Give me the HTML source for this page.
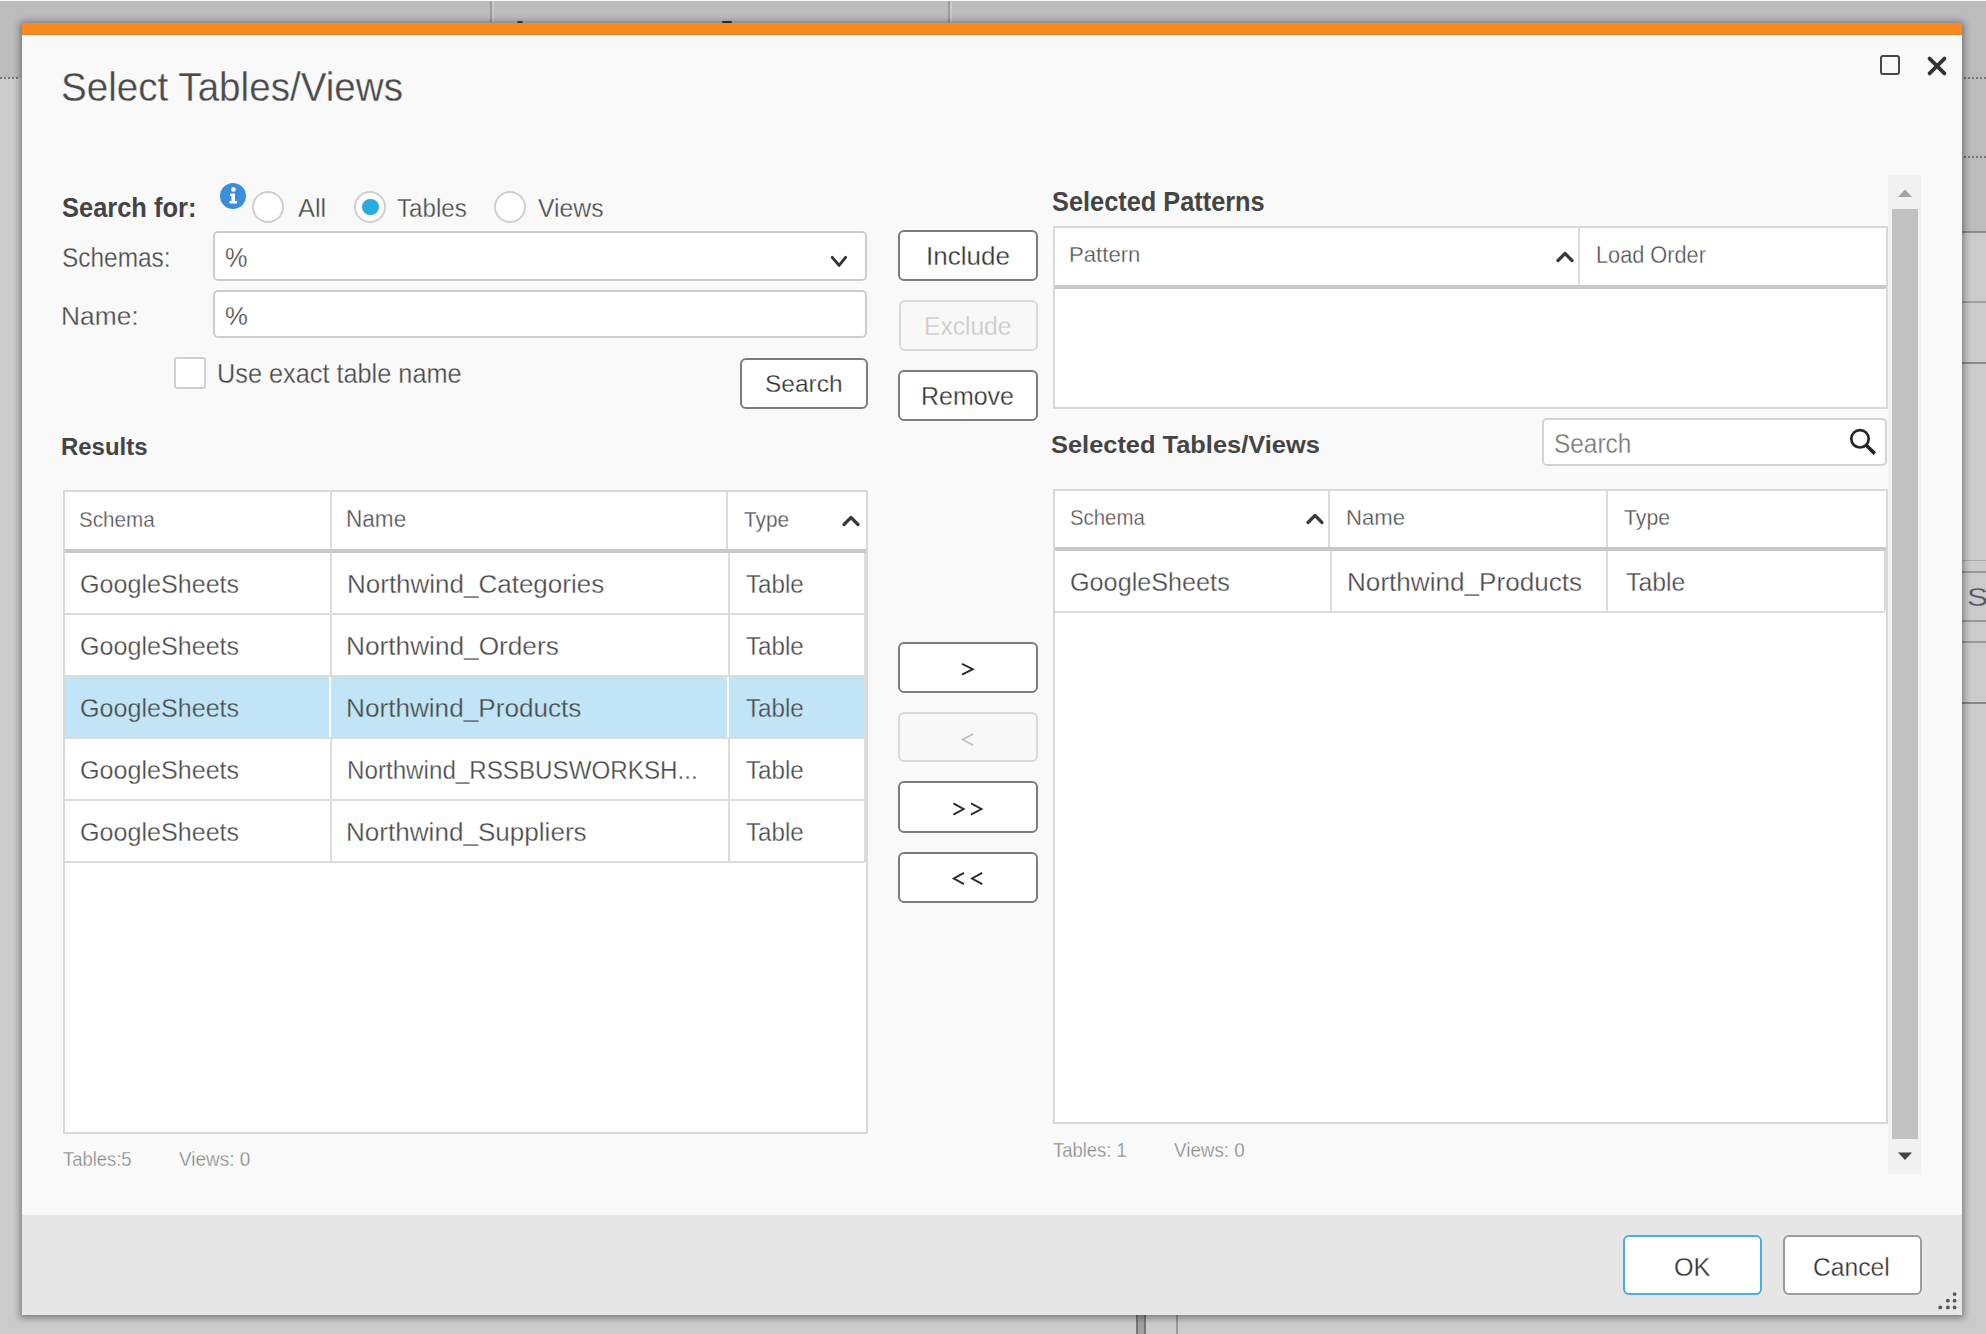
<!DOCTYPE html>
<html><head><meta charset="utf-8">
<style>
html,body{margin:0;padding:0;width:1986px;height:1334px;overflow:hidden;background:#cbcbcb;font-family:"Liberation Sans",sans-serif;}
.a{position:absolute;box-sizing:border-box;}
.t{position:absolute;white-space:nowrap;line-height:1;transform-origin:0 0;}
.btn{position:absolute;box-sizing:border-box;background:#fff;border:2px solid #7c7c7c;border-radius:6px;}
.dis{border-color:#d9d9d9;background:#f8f8f8;}
.inp{position:absolute;box-sizing:border-box;background:#fff;border:2px solid #cccccc;border-radius:5px;}
.grid{position:absolute;box-sizing:border-box;background:#fff;border:2px solid #d9d9d9;}
.l{position:absolute;}
.rad{position:absolute;box-sizing:border-box;width:32px;height:32px;border-radius:50%;border:2px solid #cfcfcf;background:#fff;}
</style></head><body>
<!-- ===== background ===== -->
<div class="l" style="left:0;top:0;width:1986px;height:1px;background:#fbfbfb"></div>
<div class="l" style="left:0;top:1px;width:1986px;height:77px;background:#bcbcbc"></div>
<div class="l" style="left:1962px;top:78px;width:24px;height:154px;background:#bcbcbc"></div>
<div class="l" style="left:0;top:77px;width:20px;height:2px;background-image:linear-gradient(90deg,#777 50%,transparent 50%);background-size:4px 2px"></div>
<div class="l" style="left:1964px;top:77px;width:22px;height:2px;background-image:linear-gradient(90deg,#777 50%,transparent 50%);background-size:4px 2px"></div>
<div class="l" style="left:1964px;top:156px;width:22px;height:2px;background-image:linear-gradient(90deg,#777 50%,transparent 50%);background-size:4px 2px"></div>
<div class="l" style="left:1962px;top:231px;width:24px;height:2px;background:#8a8a8a"></div>
<div class="l" style="left:1962px;top:301px;width:24px;height:2px;background:#a0a0a0"></div>
<div class="l" style="left:1962px;top:362px;width:24px;height:2px;background:#8a8a8a"></div>
<div class="l" style="left:1962px;top:560px;width:24px;height:1px;background:#aaa"></div>
<div class="l" style="left:1962px;top:571px;width:24px;height:2px;background:#999"></div>
<div class="l" style="left:1962px;top:620px;width:24px;height:2px;background:#999"></div>
<div class="l" style="left:1962px;top:641px;width:24px;height:2px;background:#999"></div>
<div class="l" style="left:1962px;top:702px;width:24px;height:2px;background:#888"></div>
<div class="l" style="left:490px;top:1px;width:2px;height:22px;background:#9c9c9c"></div><div class="l" style="left:492px;top:1px;width:2px;height:22px;background:#cacaca"></div>
<div class="l" style="left:948px;top:1px;width:2px;height:22px;background:#9c9c9c"></div><div class="l" style="left:950px;top:1px;width:2px;height:22px;background:#cacaca"></div>
<div class="l" style="left:517px;top:21px;width:6px;height:2px;background:#444;border-radius:1px"></div>
<div class="l" style="left:722px;top:21px;width:10px;height:2px;background:#333;border-radius:1px"></div>
<div class="l" style="left:1136px;top:1315px;width:10px;height:19px;background:#a0a0a0;border-left:2px solid #777;border-right:2px solid #777;box-sizing:border-box"></div>
<div class="l" style="left:1176px;top:1315px;width:2px;height:19px;background:#9a9a9a"></div>

<!-- ===== dialog ===== -->
<div class="l" style="left:22px;top:23px;width:1940px;height:1292px;background:#f9f9f9;box-shadow:0 1px 7px 2px rgba(0,0,0,.4)"></div>
<div class="l" style="left:22px;top:23px;width:1940px;height:11px;background:#f7891f;border-bottom:1px solid #e67f22"></div>
<div class="l" style="left:22px;top:1215px;width:1940px;height:100px;background:#e6e6e6"></div>

<!-- title buttons -->
<div class="a" style="left:1880px;top:55px;width:20px;height:20px;border:2px solid #474747;border-radius:3px"></div>
<svg class="l" style="left:1924px;top:53px" width="26" height="26" viewBox="0 0 26 26"><path d="M5.6 5.6 L20.4 20.4 M20.4 5.6 L5.6 20.4" stroke="#333" stroke-width="3.8" stroke-linecap="round"/></svg>

<!-- info + radios -->
<svg class="l" style="left:219px;top:182px" width="28" height="28" viewBox="0 0 28 28"><circle cx="14" cy="14" r="13" fill="#3b8fd8"/><circle cx="14.5" cy="7.5" r="2.3" fill="#fff"/><path d="M11 11.5 H16 V19 H18 V21.5 H10.5 V19 H12.5 V14 H11 Z" fill="#fff"/></svg>
<div class="rad" style="left:252px;top:191px"></div>
<div class="rad" style="left:354px;top:191px"></div>
<div class="l" style="left:362px;top:198.5px;width:16.5px;height:16.5px;border-radius:50%;background:#29abe2"></div>
<div class="rad" style="left:494px;top:191px"></div>

<!-- inputs -->
<div class="inp" style="left:213px;top:231px;width:654px;height:49.5px"></div>
<svg class="l" style="left:829px;top:254px" width="20" height="14" viewBox="0 0 20 14"><path d="M3.2 3.4 L10.1 11.4 L16.6 3.4" fill="none" stroke="#333" stroke-width="2.9" stroke-linecap="round" stroke-linejoin="round"/></svg>
<div class="inp" style="left:213px;top:290px;width:654px;height:48px"></div>
<div class="a" style="left:174px;top:357px;width:32px;height:32px;border:2px solid #cfcfcf;border-radius:3px;background:#fff"></div>

<!-- buttons -->
<div class="btn" style="left:740px;top:357.5px;width:127.5px;height:51px"></div>
<div class="btn" style="left:898px;top:229.5px;width:139.5px;height:51px"></div>
<div class="btn dis" style="left:898.5px;top:299.5px;width:139px;height:51px"></div>
<div class="btn" style="left:898px;top:369.5px;width:139.5px;height:51px"></div>

<div class="btn" style="left:898px;top:641.5px;width:139.5px;height:51px"></div>
<div class="btn dis" style="left:898px;top:711.5px;width:139.5px;height:50.5px"></div>
<div class="btn" style="left:898px;top:781px;width:139.5px;height:51.5px"></div>
<div class="btn" style="left:898px;top:851.5px;width:139.5px;height:51.5px"></div>
<svg class="l" style="left:900px;top:640px" width="140" height="270" viewBox="900 640 140 270">
 <path d="M962 663.8 L972.8 669.2 L962 674.6" fill="none" stroke="#2a2a2a" stroke-width="1.9"/>
 <path d="M973.2 734 L962.6 739.6 L973.2 745.2" fill="none" stroke="#bdbdbd" stroke-width="1.6"/>
 <path d="M953.4 803.4 L963.6 809 L953.4 814.6 M971 803.4 L981.4 809 L971 814.6" fill="none" stroke="#2a2a2a" stroke-width="1.9"/>
 <path d="M964 872.8 L953.8 878.5 L964 884.2 M982.2 872.8 L972 878.5 L982.2 884.2" fill="none" stroke="#2a2a2a" stroke-width="1.9"/>
</svg>

<!-- Selected patterns grid -->
<div class="grid" style="left:1052.5px;top:226px;width:835px;height:182.5px"></div>
<div class="l" style="left:1054.5px;top:285px;width:831px;height:4px;background:#c9c9c9"></div>
<div class="l" style="left:1577.5px;top:228px;width:2px;height:57px;background:#dcdcdc"></div>
<svg class="l" style="left:1553px;top:246px" width="24" height="18" viewBox="0 0 24 18"><path d="M5 14.5 L12 7.5 L19 14.5" fill="none" stroke="#3a3a3a" stroke-width="3.2" stroke-linecap="round" stroke-linejoin="round"/></svg>

<!-- search box -->
<div class="inp" style="left:1541.5px;top:417.5px;width:345.5px;height:48.5px;border-color:#d2d2d2"></div>
<svg class="l" style="left:1846px;top:425px" width="34" height="34" viewBox="0 0 34 34"><circle cx="14" cy="13.8" r="8.7" fill="none" stroke="#252525" stroke-width="2.7"/><path d="M20 20 L28.8 28.6" stroke="#252525" stroke-width="3.6"/></svg>

<!-- selected tables grid -->
<div class="grid" style="left:1052.5px;top:488.5px;width:835px;height:635.5px"></div>
<div class="l" style="left:1054.5px;top:547px;width:831px;height:4px;background:#c9c9c9"></div>
<div class="l" style="left:1327.5px;top:490.5px;width:2px;height:56.5px;background:#dcdcdc"></div>
<div class="l" style="left:1605.5px;top:490.5px;width:2px;height:56.5px;background:#dcdcdc"></div>
<div class="l" style="left:1329.5px;top:551px;width:2px;height:60px;background:#dcdcdc"></div>
<div class="l" style="left:1606px;top:551px;width:2px;height:60px;background:#dcdcdc"></div>
<div class="l" style="left:1054.5px;top:610.5px;width:830px;height:2px;background:#dcdcdc"></div>
<div class="l" style="left:1883.5px;top:551px;width:2px;height:60px;background:#dcdcdc"></div>
<svg class="l" style="left:1303px;top:508px" width="24" height="18" viewBox="0 0 24 18"><path d="M5 14.5 L12 7.5 L19 14.5" fill="none" stroke="#3a3a3a" stroke-width="3.2" stroke-linecap="round" stroke-linejoin="round"/></svg>

<!-- results grid -->
<div class="grid" style="left:62.5px;top:489.5px;width:805px;height:644.5px"></div>
<div class="l" style="left:64.5px;top:676px;width:800px;height:62px;background:#c1e5f6"></div>
<div class="l" style="left:64.5px;top:549px;width:801px;height:4px;background:#c9c9c9"></div>
<div class="l" style="left:329.5px;top:491.5px;width:2px;height:57.5px;background:#dcdcdc"></div>
<div class="l" style="left:726px;top:491.5px;width:2px;height:57.5px;background:#dcdcdc"></div>
<div class="l" style="left:329.5px;top:553px;width:2px;height:309px;background:#dcdcdc"></div>
<div class="l" style="left:727.5px;top:553px;width:2px;height:309px;background:#dcdcdc"></div>
<div class="l" style="left:863.5px;top:553px;width:2px;height:309px;background:#dcdcdc"></div>
<div class="l" style="left:64.5px;top:613px;width:800px;height:2px;background:#dcdcdc"></div>
<div class="l" style="left:64.5px;top:675px;width:800px;height:2px;background:#dcdcdc"></div>
<div class="l" style="left:64.5px;top:737px;width:800px;height:2px;background:#dcdcdc"></div>
<div class="l" style="left:64.5px;top:799px;width:800px;height:2px;background:#dcdcdc"></div>
<div class="l" style="left:64.5px;top:861px;width:800px;height:2px;background:#dcdcdc"></div>
<div class="l" style="left:328.5px;top:677px;width:2px;height:60px;background:#fff"></div>
<div class="l" style="left:726.5px;top:677px;width:2px;height:60px;background:#fff"></div>
<svg class="l" style="left:839px;top:510px" width="24" height="18" viewBox="0 0 24 18"><path d="M5 14.5 L12 7.5 L19 14.5" fill="none" stroke="#3a3a3a" stroke-width="3.2" stroke-linecap="round" stroke-linejoin="round"/></svg>

<!-- scrollbar -->
<div class="l" style="left:1888px;top:175px;width:33px;height:999px;background:#f1f1f1"></div>
<div class="l" style="left:1892px;top:209px;width:26px;height:929.5px;background:#c1c1c1"></div>
<svg class="l" style="left:1895px;top:186px" width="20" height="14" viewBox="0 0 20 14"><path d="M3 11 L10 3.5 L17 11 Z" fill="#a3a3a3"/></svg>
<svg class="l" style="left:1895px;top:1149px" width="20" height="14" viewBox="0 0 20 14"><path d="M3 3.5 L10 11 L17 3.5 Z" fill="#444"/></svg>

<!-- footer buttons -->
<div class="btn" style="left:1622.5px;top:1235px;width:139.5px;height:60px;border-color:#4aaee2"></div>
<div class="btn" style="left:1782.5px;top:1235px;width:139px;height:60px;border-color:#9c9c9c"></div>
<svg class="l" style="left:1936px;top:1290px" width="24" height="22" viewBox="1936 1290 24 22">
 <g fill="#555"><circle cx="1954.6" cy="1294.1" r="1.9"/><circle cx="1947.9" cy="1300.7" r="1.9"/><circle cx="1954.6" cy="1300.7" r="1.9"/><circle cx="1940.2" cy="1307.4" r="1.9"/><circle cx="1947.9" cy="1307.4" r="1.9"/><circle cx="1954.6" cy="1307.4" r="1.9"/></g>
</svg>

<!-- ===== texts ===== -->
<div class="t" style="left:61.08px;top:67.59px;font-size:40.25px;font-weight:400;color:#4a4a4a;transform:scaleX(0.9592);-webkit-text-stroke:0.3px #f9f9f9">Select Tables/Views</div>
<div class="t" style="left:61.67px;top:193.93px;font-size:27.5px;font-weight:700;color:#444;transform:scaleX(0.9254)">Search for:</div>
<div class="t" style="left:298.00px;top:194.79px;font-size:26.25px;font-weight:400;color:#4a4a4a;transform:scaleX(0.9643);-webkit-text-stroke:0.3px #f9f9f9">All</div>
<div class="t" style="left:397.08px;top:194.79px;font-size:26.25px;font-weight:400;color:#4a4a4a;transform:scaleX(0.9189);-webkit-text-stroke:0.3px #f9f9f9">Tables</div>
<div class="t" style="left:538.00px;top:194.79px;font-size:26.25px;font-weight:400;color:#4a4a4a;transform:scaleX(0.9420);-webkit-text-stroke:0.3px #f9f9f9">Views</div>
<div class="t" style="left:61.70px;top:244.24px;font-size:27.25px;font-weight:400;color:#4a4a4a;transform:scaleX(0.8958);-webkit-text-stroke:0.3px #f9f9f9">Schemas:</div>
<div class="t" style="left:60.61px;top:302.78px;font-size:26.5px;font-weight:400;color:#4a4a4a;transform:scaleX(0.9946);-webkit-text-stroke:0.3px #f9f9f9">Name:</div>
<div class="t" style="left:224.65px;top:244.66px;font-size:26.75px;font-weight:400;color:#4a4a4a;transform:scaleX(0.9455);-webkit-text-stroke:0.3px #fff">%</div>
<div class="t" style="left:224.61px;top:303.20px;font-size:26.0px;font-weight:400;color:#4a4a4a;transform:scaleX(0.9905);-webkit-text-stroke:0.3px #fff">%</div>
<div class="t" style="left:217.41px;top:360.56px;font-size:26.75px;font-weight:400;color:#4a4a4a;transform:scaleX(0.9453);-webkit-text-stroke:0.3px #f9f9f9">Use exact table name</div>
<div class="t" style="left:925.50px;top:243.10px;font-size:26.0px;font-weight:400;color:#333;transform:scaleX(1.0012);-webkit-text-stroke:0.3px #fff">Include</div>
<div class="t" style="left:923.89px;top:313.51px;font-size:25.75px;font-weight:400;color:#c9c9c9;transform:scaleX(0.9539);-webkit-text-stroke:0.3px #f8f8f8">Exclude</div>
<div class="t" style="left:921.46px;top:383.61px;font-size:25.75px;font-weight:400;color:#333;transform:scaleX(0.9699);-webkit-text-stroke:0.3px #fff">Remove</div>
<div class="t" style="left:765.30px;top:371.78px;font-size:24.5px;font-weight:400;color:#333;transform:scaleX(0.9987);-webkit-text-stroke:0.3px #fff">Search</div>
<div class="t" style="left:1051.75px;top:188.56px;font-size:26.75px;font-weight:700;color:#444;transform:scaleX(0.9473)">Selected Patterns</div>
<div class="t" style="left:1069.01px;top:244.39px;font-size:22.25px;font-weight:400;color:#525252;transform:scaleX(0.9956);-webkit-text-stroke:0.3px #fff">Pattern</div>
<div class="t" style="left:1595.71px;top:243.75px;font-size:23.0px;font-weight:400;color:#525252;transform:scaleX(0.9447);-webkit-text-stroke:0.3px #fff">Load Order</div>
<div class="t" style="left:1051.46px;top:432.88px;font-size:24.5px;font-weight:700;color:#444;transform:scaleX(1.0370)">Selected Tables/Views</div>
<div class="t" style="left:1553.99px;top:430.56px;font-size:26.75px;font-weight:400;color:#777;transform:scaleX(0.9122);-webkit-text-stroke:0.3px #fff">Search</div>
<div class="t" style="left:61.46px;top:435.26px;font-size:24.75px;font-weight:700;color:#444;transform:scaleX(0.9678)">Results</div>
<div class="t" style="left:79.49px;top:507.96px;font-size:22.75px;font-weight:400;color:#525252;transform:scaleX(0.9072);-webkit-text-stroke:0.3px #fff">Schema</div>
<div class="t" style="left:345.64px;top:508.15px;font-size:23.0px;font-weight:400;color:#525252;transform:scaleX(0.9810);-webkit-text-stroke:0.3px #fff">Name</div>
<div class="t" style="left:744.30px;top:508.97px;font-size:22.5px;font-weight:400;color:#525252;transform:scaleX(0.9271);-webkit-text-stroke:0.3px #fff">Type</div>
<div class="t" style="left:1069.90px;top:506.26px;font-size:22.75px;font-weight:400;color:#525252;transform:scaleX(0.8952);-webkit-text-stroke:0.3px #fff">Schema</div>
<div class="t" style="left:1345.66px;top:506.26px;font-size:22.75px;font-weight:400;color:#525252;transform:scaleX(0.9724);-webkit-text-stroke:0.3px #fff">Name</div>
<div class="t" style="left:1624.00px;top:506.26px;font-size:22.75px;font-weight:400;color:#525252;transform:scaleX(0.9347);-webkit-text-stroke:0.3px #fff">Type</div>
<div class="t" style="left:1069.83px;top:569.20px;font-size:26.0px;font-weight:400;color:#4a4a4a;transform:scaleX(0.9693);-webkit-text-stroke:0.3px #fff">GoogleSheets</div>
<div class="t" style="left:1346.79px;top:569.20px;font-size:26.0px;font-weight:400;color:#4a4a4a;transform:scaleX(1.0043);-webkit-text-stroke:0.3px #fff">Northwind_Products</div>
<div class="t" style="left:1625.70px;top:569.20px;font-size:26.0px;font-weight:400;color:#4a4a4a;transform:scaleX(0.9525);-webkit-text-stroke:0.3px #fff">Table</div>
<div class="t" style="left:62.60px;top:1150.01px;font-size:19.75px;font-weight:400;color:#888;transform:scaleX(0.9315);-webkit-text-stroke:0.3px #f9f9f9">Tables:5</div>
<div class="t" style="left:178.60px;top:1150.01px;font-size:19.75px;font-weight:400;color:#888;transform:scaleX(0.9581);-webkit-text-stroke:0.3px #f9f9f9">Views: 0</div>
<div class="t" style="left:1052.60px;top:1140.09px;font-size:20.25px;font-weight:400;color:#888;transform:scaleX(0.9100);-webkit-text-stroke:0.3px #f9f9f9">Tables: 1</div>
<div class="t" style="left:1173.60px;top:1140.09px;font-size:20.25px;font-weight:400;color:#888;transform:scaleX(0.9289);-webkit-text-stroke:0.3px #f9f9f9">Views: 0</div>
<div class="t" style="left:1674.03px;top:1253.60px;font-size:26.0px;font-weight:400;color:#333;transform:scaleX(0.9694);-webkit-text-stroke:0.3px #fff">OK</div>
<div class="t" style="left:1813.35px;top:1253.60px;font-size:26.0px;font-weight:400;color:#333;transform:scaleX(0.9468);-webkit-text-stroke:0.3px #fff">Cancel</div>
<div class="t" style="left:1966.80px;top:584.20px;font-size:26.0px;font-weight:400;color:#525252;transform:scaleX(1.2000);-webkit-text-stroke:0.3px #c9c9c9">S</div>
<div class="t" style="left:79.73px;top:571.10px;font-size:26.0px;font-weight:400;color:#4a4a4a;transform:scaleX(0.9656);-webkit-text-stroke:0.3px #fff">GoogleSheets</div>
<div class="t" style="left:346.50px;top:571.10px;font-size:26.0px;font-weight:400;color:#4a4a4a;transform:scaleX(0.9996);-webkit-text-stroke:0.3px #fff">Northwind_Categories</div>
<div class="t" style="left:746.30px;top:571.10px;font-size:26.0px;font-weight:400;color:#4a4a4a;transform:scaleX(0.9295);-webkit-text-stroke:0.3px #fff">Table</div>
<div class="t" style="left:79.73px;top:633.10px;font-size:26.0px;font-weight:400;color:#4a4a4a;transform:scaleX(0.9656);-webkit-text-stroke:0.3px #fff">GoogleSheets</div>
<div class="t" style="left:346.48px;top:633.10px;font-size:26.0px;font-weight:400;color:#4a4a4a;transform:scaleX(1.0087);-webkit-text-stroke:0.3px #fff">Northwind_Orders</div>
<div class="t" style="left:746.30px;top:633.10px;font-size:26.0px;font-weight:400;color:#4a4a4a;transform:scaleX(0.9295);-webkit-text-stroke:0.3px #fff">Table</div>
<div class="t" style="left:79.73px;top:695.10px;font-size:26.0px;font-weight:400;color:#4a4a4a;transform:scaleX(0.9656);-webkit-text-stroke:0.3px #c1e5f6">GoogleSheets</div>
<div class="t" style="left:346.49px;top:695.10px;font-size:26.0px;font-weight:400;color:#4a4a4a;transform:scaleX(1.0056);-webkit-text-stroke:0.3px #c1e5f6">Northwind_Products</div>
<div class="t" style="left:746.30px;top:695.10px;font-size:26.0px;font-weight:400;color:#4a4a4a;transform:scaleX(0.9295);-webkit-text-stroke:0.3px #c1e5f6">Table</div>
<div class="t" style="left:79.73px;top:757.10px;font-size:26.0px;font-weight:400;color:#4a4a4a;transform:scaleX(0.9656);-webkit-text-stroke:0.3px #fff">GoogleSheets</div>
<div class="t" style="left:346.64px;top:757.10px;font-size:26.0px;font-weight:400;color:#4a4a4a;transform:scaleX(0.9298);-webkit-text-stroke:0.3px #fff">Northwind_RSSBUSWORKSH...</div>
<div class="t" style="left:746.30px;top:757.10px;font-size:26.0px;font-weight:400;color:#4a4a4a;transform:scaleX(0.9295);-webkit-text-stroke:0.3px #fff">Table</div>
<div class="t" style="left:79.73px;top:819.10px;font-size:26.0px;font-weight:400;color:#4a4a4a;transform:scaleX(0.9656);-webkit-text-stroke:0.3px #fff">GoogleSheets</div>
<div class="t" style="left:346.49px;top:819.10px;font-size:26.0px;font-weight:400;color:#4a4a4a;transform:scaleX(1.0030);-webkit-text-stroke:0.3px #fff">Northwind_Suppliers</div>
<div class="t" style="left:746.30px;top:819.10px;font-size:26.0px;font-weight:400;color:#4a4a4a;transform:scaleX(0.9295);-webkit-text-stroke:0.3px #fff">Table</div>
</body></html>
